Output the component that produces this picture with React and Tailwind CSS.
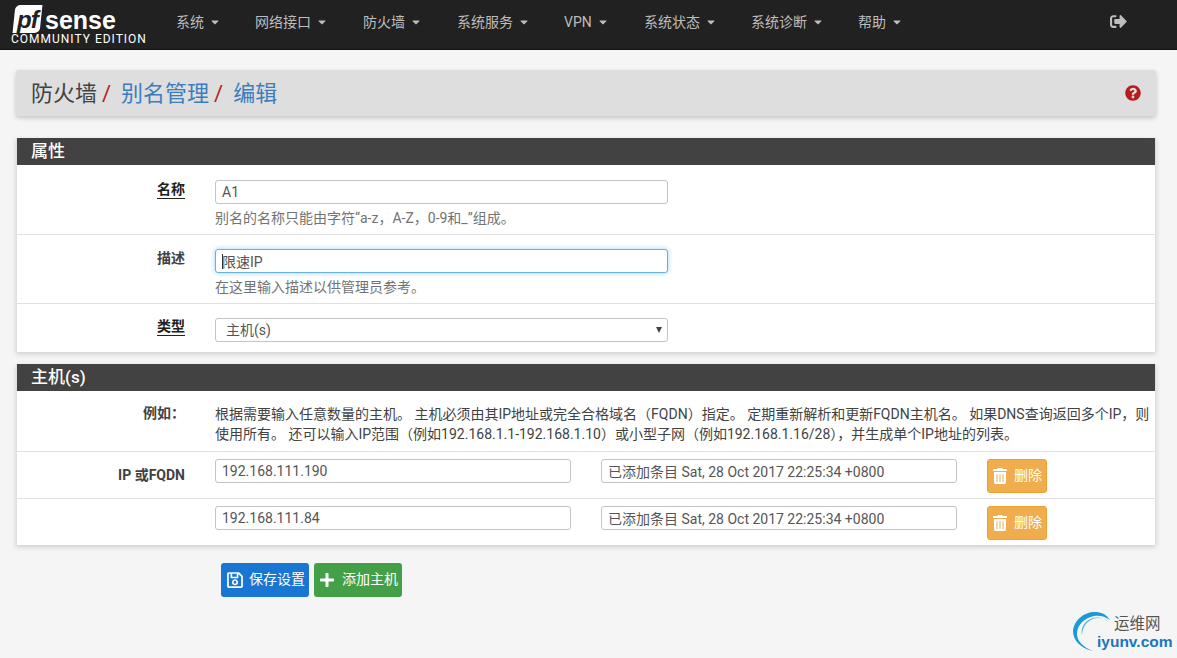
import React from "react";
import {
  FaCaretDown,
  FaPlus,
  FaQuestionCircle,
  FaRegSave,
  FaSignOutAlt,
  FaTrashAlt,
} from "react-icons/fa";

const font = "font-['Roboto','Noto_Sans_CJK_SC',sans-serif]";
const navItems = [
  ["系统", "w-[79px]"],
  ["网络接口", "w-[108px]"],
  ["防火墙", "w-[94px]"],
  ["系统服务", "w-[107px]"],
  ["VPN", "w-[80px]"],
  ["系统状态", "w-[107px]"],
  ["系统诊断", "w-[107px]"],
  ["帮助", "w-[80px]"],
];

function Logo() {
  return (
    <div className="w-[176px] shrink-0 pl-[11px] pt-[5px]">
      <div className="flex h-[28px] items-end pl-[3px]">
        <div className="flex h-[28px] w-[27px] -skew-x-6 items-center justify-center rounded-tl-[5px] rounded-br-[5px] bg-white">
          <span className="skew-x-6 pt-[2px] font-['Liberation_Sans'] text-[24px] font-bold italic leading-none tracking-[-1px] text-[#212121]">
            pf
          </span>
        </div>
        <span className="ml-[4px] font-['Liberation_Sans'] text-[25px] font-bold leading-[25px] text-white">
          sense
        </span>
      </div>
      <div className="font-['Roboto'] text-[12px] leading-[12px] tracking-[1px] whitespace-nowrap text-white">
        COMMUNITY EDITION
      </div>
    </div>
  );
}

function Navbar() {
  return (
    <nav className="flex h-[50px] items-stretch border-b border-[#111] bg-[#212121]">
      <Logo />
      {navItems.map(([label, width]) => (
        <div
          key={label}
          className={`flex items-center pb-[5px] text-[14px] text-[#bdbdbd] ${width}`}
        >
          {label}
          <FaCaretDown className="ml-[5px] text-[12px]" />
        </div>
      ))}
      <div className="ml-auto flex items-center pr-[50px] pb-[7px] text-[#bdbdbd]">
        <FaSignOutAlt className="text-[17px]" />
      </div>
    </nav>
  );
}

function Breadcrumb() {
  return (
    <div className="mt-[20px] mr-[21px] ml-[16px] flex h-[46px] items-center justify-between rounded-[3px] bg-[#dedede] px-[15px] pt-[2px] shadow-[0_2px_5px_rgba(0,0,0,0.2)]">
      <h1 className="text-[22px] leading-none text-[#424242]">
        防火墙<span className="ml-[5px] text-[#b71c1c]">/</span>
        <span className="ml-[10px] text-[#3b7dbd]">别名管理</span>
        <span className="ml-[5px] text-[#b71c1c]">/</span>
        <span className="ml-[10px] text-[#3b7dbd]">编辑</span>
      </h1>
      <FaQuestionCircle className="-mt-[2px] text-[16px] text-[#b71c1c]" />
    </div>
  );
}

function Panel({ title, className, children }) {
  return (
    <section
      className={`mr-[21px] ml-[16px] border-x border-[#e0e0e0] bg-white shadow-[0_2px_5px_rgba(0,0,0,0.16)] ${className}`}
    >
      <div className="flex h-[27px] items-center bg-[#424242] pl-[14px] text-[17px] font-medium text-white">
        {title}
      </div>
      {children}
    </section>
  );
}

function Label({ children, underline }) {
  return (
    <div className="w-[198px] shrink-0 pr-[30px] text-right text-[14px] leading-[18px] font-bold text-[#424242]">
      <span className={underline ? "border-b border-[#212121] pb-[1px] text-[#212121]" : ""}>
        {children}
      </span>
    </div>
  );
}

function TextInput({ value, width = "w-[453px]", focused }) {
  return (
    <input
      readOnly
      defaultValue={value}
      className={`block h-[24px] rounded-[3px] border bg-white px-[6px] text-[14px] text-[#555] outline-none ${width} ${
        focused
          ? "border-[#66afe9] shadow-[0_0_5px_rgba(102,175,233,0.6)]"
          : "border-[#c4c4c4]"
      }`}
    />
  );
}

function Help({ children }) {
  return (
    <p className="mt-[5px] text-[14px] leading-[18px] text-[#737373]">{children}</p>
  );
}

function HostRow({ label, ip, border }) {
  return (
    <div className={`flex pt-[7px] ${border ? "h-[47px] border-b border-[#e0e0e0]" : "h-[46px]"}`}>
      <div className="w-[198px] shrink-0 pt-[7px] pr-[30px] text-right text-[14px] leading-[18px] font-bold text-[#424242]">
        {label}
      </div>
      <TextInput value={ip} width="w-[356px]" />
      <div className="ml-[30px]">
        <TextInput value="已添加条目 Sat, 28 Oct 2017 22:25:34 +0800" width="w-[356px]" />
      </div>
      <button className="ml-[30px] flex h-[34px] w-[60px] items-center rounded-[3px] border border-[#eea236] bg-[#f0ad4e] pb-[1px] pl-[4px] text-[14px] text-white">
        <FaTrashAlt className="mr-[6px] text-[16px]" />
        删除
      </button>
    </div>
  );
}

function Watermark() {
  return (
    <div className="absolute right-[4px] bottom-[7px] h-[42px] w-[104px]">
      <svg width="40" height="42" viewBox="0 0 40 42" className="absolute top-[3px] left-[4px]" fill="none">
        <path d="M20 39C7 36 0 28 0 19 1 8 11 0 22 0c6 0 11 2 15 8-5-4-11-5-16-4C11 6 4 13 4 22c0 7 6 13 16 17z" fill="#1a9ad6" />
        <path d="M35 10C29 4 19 4 13 10c-4 4-5 9-4 13C9 13 17 6 25 6c4 0 8 1 10 4z" fill="#4fb3e3" />
      </svg>
      <span className="absolute top-[6px] left-[45px] text-[15.5px] leading-[18px] text-[#555]">
        运维网
      </span>
      <span className="absolute top-[24px] left-[28px] font-['Liberation_Sans'] text-[15.5px] leading-[18px] font-bold text-[#1b75bc]">
        iyunv.com
      </span>
    </div>
  );
}

export default function App() {
  return (
    <div className={`relative h-[658px] overflow-hidden bg-[#f5f5f5] ${font}`}>
      <Navbar />
      <Breadcrumb />
      <Panel title="属性" className="mt-[22px]">
        <div className="flex h-[70px] border-b border-[#e0e0e0] pt-[15px]">
          <Label underline>名称</Label>
          <div>
            <TextInput value="A1" />
            <Help>别名的名称只能由字符“a-z，A-Z，0-9和_”组成。</Help>
          </div>
        </div>
        <div className="flex h-[69px] border-b border-[#e0e0e0] pt-[14px]">
          <Label>描述</Label>
          <div className="relative">
            <TextInput value="限速IP" focused />
            <span className="absolute top-[5px] left-[7px] h-[15px] w-px bg-[#333]" />
            <Help>在这里输入描述以供管理员参考。</Help>
          </div>
        </div>
        <div className="flex h-[48px] pt-[14px]">
          <div className="-mt-[1px]">
            <Label underline>类型</Label>
          </div>
          <div className="relative">
            <select className="block h-[24px] w-[453px] appearance-none rounded-[3px] border border-[#c4c4c4] bg-white pt-[1px] pl-[10px] text-[14px] text-[#555]">
              <option>主机(s)</option>
            </select>
            <span className="absolute top-[9px] right-[6px] h-0 w-0 border-x-[3px] border-t-[6px] border-x-transparent border-t-[#444]" />
          </div>
        </div>
      </Panel>
      <Panel title="主机(s)" className="mt-[12px]">
        <div className="flex h-[61px] border-b border-[#e0e0e0] pt-[13px]">
          <Label>例如：</Label>
          <p className="w-[938px] text-[14px] leading-[20px] text-[#424242]">
            根据需要输入任意数量的主机。 主机必须由其IP地址或完全合格域名（FQDN）指定。 定期重新解析和更新FQDN主机名。 如果DNS查询返回多个IP，则使用所有。 还可以输入IP范围（例如192.168.1.1-192.168.1.10）或小型子网（例如192.168.1.16/28），并生成单个IP地址的列表。
          </p>
        </div>
        <HostRow label="IP 或FQDN" ip="192.168.111.190" border />
        <HostRow label="" ip="192.168.111.84" />
      </Panel>
      <div className="mt-[18px] ml-[221px] flex gap-[5px]">
        <button className="flex h-[34px] w-[88px] items-center rounded-[3px] bg-[#1976d2] pb-[1px] pl-[5px] text-[14px] text-white">
          <FaRegSave className="mr-[5px] text-[18px]" />
          保存设置
        </button>
        <button className="flex h-[34px] w-[88px] items-center rounded-[3px] bg-[#43a047] pb-[1px] pl-[5px] text-[14px] text-white">
          <FaPlus className="mr-[7px] text-[16px]" />
          添加主机
        </button>
      </div>
      <Watermark />
    </div>
  );
}
